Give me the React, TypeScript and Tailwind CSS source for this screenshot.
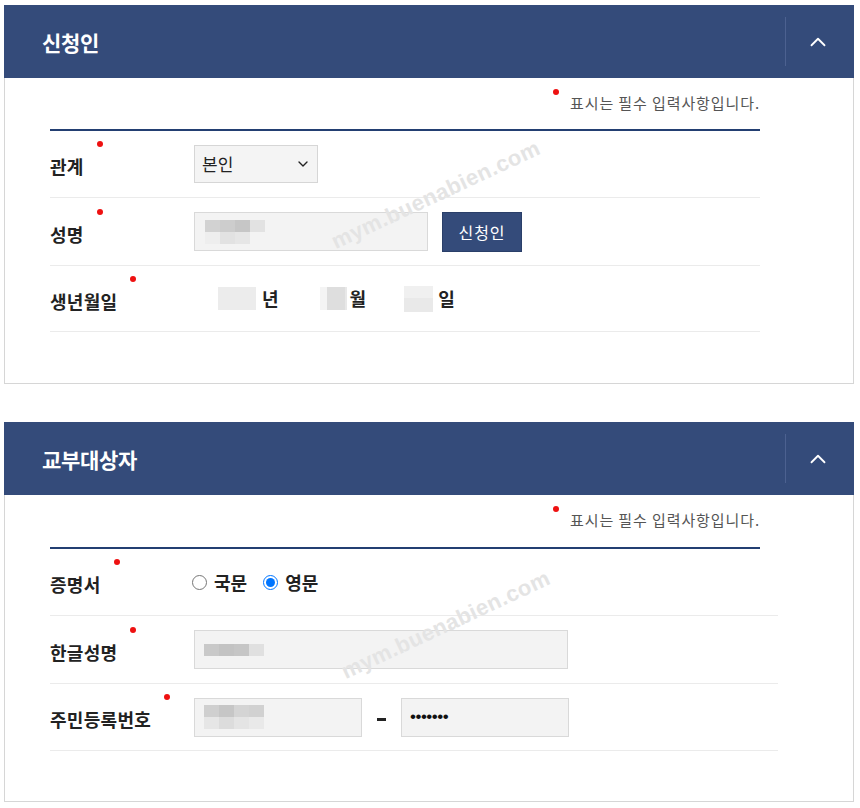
import { ChevronDown, ChevronUp } from 'lucide-react'

const font = { fontFamily: '"Noto Sans CJK KR", "Noto Sans", sans-serif' }

function Dot({ className }: { className: string }) {
  return <span className={`absolute h-[6px] w-[6px] rounded-full bg-[#ee1111] ${className}`} />
}

function Label({ text }: { text: string }) {
  return (
    <div className="w-[144px] shrink-0 pt-[5px]">
      <span className="relative inline-block text-[18px] font-semibold leading-[24px] tracking-[0.3px] text-[#222]">
        {text}
        <Dot className="right-[-19px] top-[-13px]" />
      </span>
    </div>
  )
}

function Blur({ cells }: { cells: string[][] }) {
  return (
    <div className="flex flex-col">
      {cells.map((row, i) => (
        <div key={i} className="flex">
          {row.map((c, j) => (
            <span key={j} className={`h-[12px] w-[15px] ${c}`} />
          ))}
        </div>
      ))}
    </div>
  )
}

function Header({ title }: { title: string }) {
  return (
    <div className="flex h-[73px] items-center justify-between bg-[#344b7a]">
      <h2 className="pl-[38px] pt-[2px] text-[21px] font-bold tracking-[-0.3px] text-white">{title}</h2>
      <div className="flex h-[49px] w-[69px] items-center justify-center border-l border-[#4c6190]">
        <ChevronUp className="h-[26px] w-[26px] -translate-x-[2px] text-white" strokeWidth={1.7} />
      </div>
    </div>
  )
}

function Note({ h }: { h: string }) {
  return (
    <div className={`flex w-[710px] justify-end pt-[15px] ${h}`}>
      <span className="relative text-[15px] leading-[20px] tracking-[0.9px] text-[#555]">
        <Dot className="left-[-17px] top-[-4px]" />
        표시는 필수 입력사항입니다.
      </span>
    </div>
  )
}

function Watermark({ className }: { className: string }) {
  return (
    <div
      className={`pointer-events-none absolute rotate-[-25deg] text-[22px] font-bold tracking-[0.5px] text-[#e4e4e4] ${className}`}
      style={{ fontFamily: '"Liberation Sans", Arial, sans-serif' }}
    >
      mym.buenabien.com
    </div>
  )
}

const inputBox = 'h-[39px] border border-[#d9d9d9] bg-[#f3f3f3]'

export default function App() {
  return (
    <div className="relative h-[808px] w-[860px] bg-white pl-[4px] pt-[5px]" style={font}>
      {/* 신청인 */}
      <section className="w-[850px]">
        <Header title="신청인" />
        <div className="border-x border-b border-[#d6d6d6] px-[45px]">
          <Note h="h-[51px]" />
          <div className="h-[2px] w-[710px] bg-[#233f72]" />
          <div className="flex h-[67px] w-[710px] items-center border-b border-[#ebebeb]">
            <Label text="관계" />
            <div className="flex h-[38px] w-[124px] items-center justify-between border border-[#d6d6d6] bg-[#f4f4f4] pl-[7px] pr-[6px] text-[17px] text-[#222]">
              <span>본인</span>
              <ChevronDown className="h-[16px] w-[16px] text-[#222]" strokeWidth={2} />
            </div>
          </div>
          <div className="flex h-[68px] w-[710px] items-center border-b border-[#ebebeb]">
            <Label text="성명" />
            <div className={`${inputBox} flex w-[234px] items-center pl-[10px]`}>
              <Blur
                cells={[
                  ['bg-[#d2d2d2]', 'bg-[#cdcdcd]', 'bg-[#c6c6c6]', 'bg-[#e2e2e2]'],
                  ['bg-[#eeeeee]', 'bg-[#e2e2e2]', 'bg-[#e6e6e6]', 'bg-[#f3f3f3]'],
                ]}
              />
            </div>
            <button className="ml-[14px] h-[40px] w-[80px] border border-[#2a3f69] bg-[#344b7a] text-[16px] tracking-[1px] text-white">
              신청인
            </button>
          </div>
          <div className="flex h-[66px] w-[710px] items-center border-b border-[#ebebeb]">
            <Label text="생년월일" />
            <div className="flex items-center text-[18px] font-bold text-[#222]">
              <span className="ml-[24px] h-[23px] w-[38px] bg-[#ececec]" />
              <span className="ml-[6px]">년</span>
              <span className="ml-[41px] flex h-[23px] w-[27px]">
                <span className="w-[7px] bg-[#f4f4f4]" />
                <span className="w-[18px] bg-[#dedede]" />
                <span className="w-[2px] bg-[#e8e8e8]" />
              </span>
              <span className="ml-[3px]">월</span>
              <span className="ml-[38px] flex h-[26px] w-[29px] flex-col">
                <span className="h-[12px] bg-[#f0f0f0]" />
                <span className="h-[14px] bg-[#e9e9e9]" />
              </span>
              <span className="ml-[5px]">일</span>
            </div>
          </div>
          <div className="h-[51px]" />
        </div>
      </section>

      {/* 교부대상자 */}
      <section className="mt-[38px] w-[850px]">
        <Header title="교부대상자" />
        <div className="border-x border-b border-[#d6d6d6] px-[45px]">
          <Note h="h-[52px]" />
          <div className="h-[2px] w-[710px] bg-[#233f72]" />
          <div className="flex h-[67px] w-[728px] items-center border-b border-[#ebebeb]">
            <Label text="증명서" />
            <label className="flex items-center text-[18px] font-semibold text-[#222]">
              <input type="radio" name="cert" className="m-0 ml-[-2px] h-[15px] w-[15px]" />
              <span className="ml-[7px]">국문</span>
            </label>
            <label className="ml-[16px] flex items-center text-[18px] font-semibold text-[#222]">
              <input type="radio" name="cert" defaultChecked className="m-0 h-[15px] w-[15px]" />
              <span className="ml-[7px]">영문</span>
            </label>
          </div>
          <div className="flex h-[68px] w-[728px] items-center border-b border-[#ebebeb]">
            <Label text="한글성명" />
            <div className={`${inputBox} flex w-[374px] items-center pl-[9px]`}>
              <Blur
                cells={[
                  ['bg-[#c9c9c9]', 'bg-[#c3c3c3]', 'bg-[#c6c6c6]', 'bg-[#e0e0e0]'],
                ]}
              />
            </div>
          </div>
          <div className="flex h-[67px] w-[728px] items-center border-b border-[#ebebeb]">
            <Label text="주민등록번호" />
            <div className={`${inputBox} flex w-[168px] items-center pl-[9px]`}>
              <Blur
                cells={[
                  ['bg-[#cfcfcf]', 'bg-[#c6c6c6]', 'bg-[#d4d4d4]', 'bg-[#d1d1d1]'],
                  ['bg-[#e6e6e6]', 'bg-[#dcdcdc]', 'bg-[#e4e4e4]', 'bg-[#e9e9e9]'],
                ]}
              />
            </div>
            <span className="mx-[15px] mt-[4px] h-[3px] w-[9px] bg-[#222]" />
            <div
              className={`${inputBox} flex w-[168px] items-center pl-[8px] text-[17px] tracking-[-0.5px] text-[#111]`}
              style={{ fontFamily: '"Liberation Sans", Arial, sans-serif' }}
            >
              •••••••
            </div>
          </div>
          <div className="h-[50px]" />
        </div>
      </section>

      <Watermark className="left-[322px] top-[178px]" />
      <Watermark className="left-[332px] top-[608px]" />
    </div>
  )
}
